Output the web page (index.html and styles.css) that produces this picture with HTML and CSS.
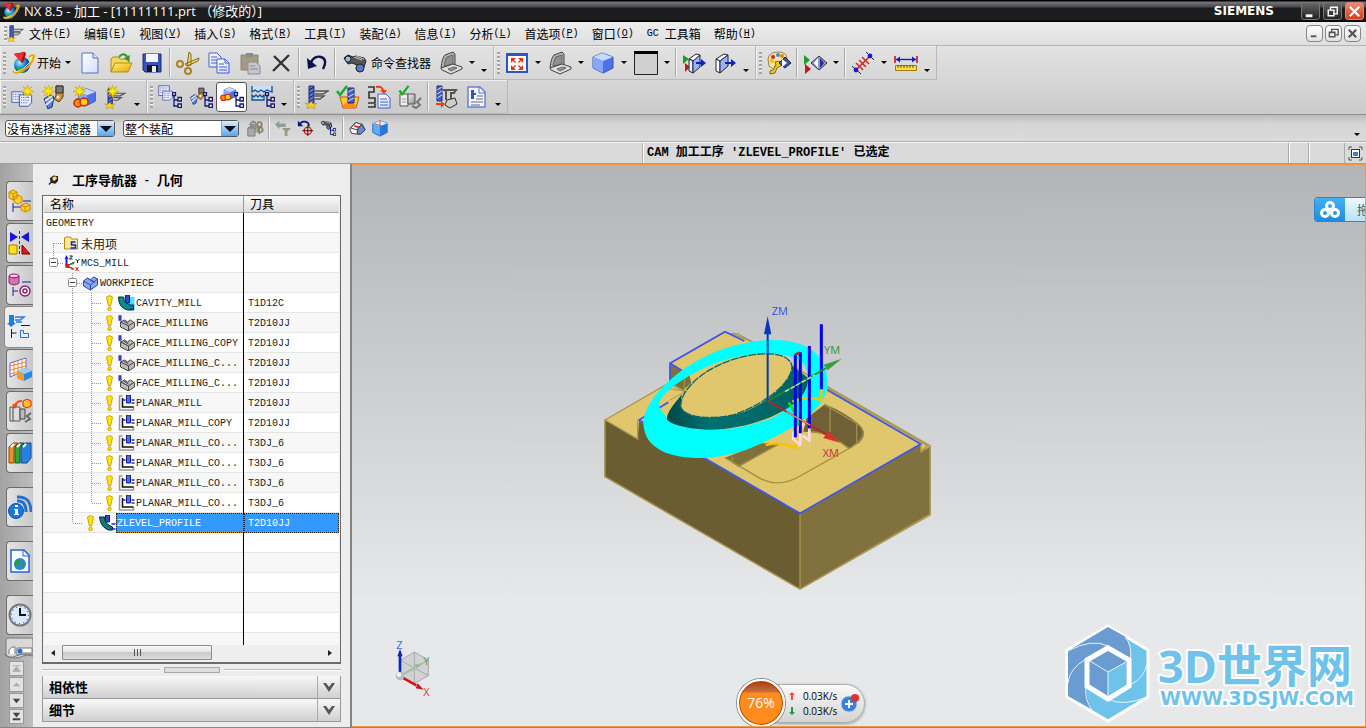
FILE: index.html
```html
<!DOCTYPE html>
<html lang="zh-CN">
<head>
<meta charset="utf-8">
<title>NX 8.5 - 加工</title>
<link rel="stylesheet" href="styles.css">
</head>
<body>
<svg class="sprite" aria-hidden="true">
  <defs>
    <linearGradient id="gBlue" x1="0" y1="0" x2="1" y2="1"><stop offset="0" stop-color="#b9d0ff"/><stop offset="1" stop-color="#3a62e0"/></linearGradient>
    <linearGradient id="gPage" x1="0" y1="0" x2="1" y2="1"><stop offset="0" stop-color="#fff"/><stop offset="1" stop-color="#cfdcff"/></linearGradient>
    <linearGradient id="gGold" x1="0" y1="0" x2="1" y2="1"><stop offset="0" stop-color="#fff27a"/><stop offset="1" stop-color="#e8a800"/></linearGradient>
    <linearGradient id="gGrey" x1="0" y1="0" x2="1" y2="1"><stop offset="0" stop-color="#f4f4f4"/><stop offset="1" stop-color="#8a8a8a"/></linearGradient>
    <radialGradient id="gGlobe" cx=".35" cy=".35"><stop offset="0" stop-color="#aef0ff"/><stop offset=".6" stop-color="#2a9be0"/><stop offset="1" stop-color="#0a4aa0"/></radialGradient>
    <linearGradient id="gTeal" x1="0" y1="0" x2="1" y2="0"><stop offset="0" stop-color="#004848"/><stop offset=".3" stop-color="#007070"/><stop offset="1" stop-color="#006060"/></linearGradient>
  </defs>
  <symbol id="nx" viewBox="0 0 24 24"><circle cx="11" cy="14" r="8" fill="url(#gGlobe)"/><path d="M5 17q3-3 6 1t5 2q-5 4-9 0z" fill="#2fa84a"/><path d="M2 20Q5 24 13 19T23 5Q22 3 18 6" fill="none" stroke="#e8a800" stroke-width="2"/><path d="M3 20Q6 22 13 17T21 5" fill="none" stroke="#fff07a" stroke-width="1"/><path d="M3 3l11-2-3 11z" fill="#e01818"/><path d="M3 3l11-2 1 2-3 9z" fill="#a80c0c"/><path d="M3 3l10-1-3 9z" fill="#f03030"/></symbol>
  <symbol id="new" viewBox="0 0 24 24"><path d="M4 2h11l5 5v15H4z" fill="url(#gPage)" stroke="#5a6cc8"/><path d="M15 2v5h5" fill="#dfe6ff" stroke="#5a6cc8"/></symbol>
  <symbol id="open" viewBox="0 0 24 24"><path d="M2 21V8l2-2h5l2 2h9v5" fill="#f5d860" stroke="#b88a10"/><path d="M2 21l4-9h17l-4 9z" fill="url(#gGold)" stroke="#b88a10"/><path d="M10 6q5-6 9 1" fill="none" stroke="#2f9a2f" stroke-width="2"/><path d="M21 4l-1 7-5-4z" fill="#2f9a2f"/></symbol>
  <symbol id="save" viewBox="0 0 24 24"><path d="M3 3h18v18H5l-2-2z" fill="#3a52b8" stroke="#1c2c70"/><path d="M6 3h12v8H6z" fill="#f0f4ff"/><path d="M7 14h11v7H7z" fill="#10182c"/><path d="M12 15h4v6h-4z" fill="#e8e8e8"/></symbol>
  <symbol id="cut" viewBox="0 0 24 24"><path d="M11 15L13 1l2 2 0 11zM9 13l14-6-1 3-11 5z" fill="#f0d878" stroke="#8a6a10"/><circle cx="4" cy="13" r="3" fill="none" stroke="#a8841c" stroke-width="2"/><circle cx="12" cy="20" r="3" fill="none" stroke="#a8841c" stroke-width="2"/></symbol>
  <symbol id="copy" viewBox="0 0 24 24"><path d="M2 2h8l4 4v10H2z" fill="url(#gPage)" stroke="#4a5cc8"/><path d="M4 6h6M4 9h8M4 12h6" stroke="#4a5cc8"/><path d="M10 8h8l4 4v10H10z" fill="url(#gPage)" stroke="#4a5cc8"/><path d="M18 8v4h4M12 13h5M12 16h8M12 19h8" stroke="#4a5cc8" fill="none"/></symbol>
  <symbol id="paste" viewBox="0 0 24 24"><path d="M3 4h17v15H3z" fill="#a39b80" stroke="#8d8670"/><path d="M8 2h7v4H8z" fill="#8a8a8a"/><path d="M10 11h8l4 4v8H10z" fill="#c4c6cc" stroke="#8b8e98"/><path d="M12 15h5M12 18h8" stroke="#8b8e98"/></symbol>
  <symbol id="del" viewBox="0 0 24 24"><path d="M5 5l15 15M20 4L4 20" stroke="#333" stroke-width="2.400" fill="none"/></symbol>
  <symbol id="undo" viewBox="0 0 24 24"><path d="M5 13Q9 4 16 6T18 18" fill="none" stroke="#0c1050" stroke-width="2.400"/><path d="M2 7l1 11 9-3z" fill="#0c1050"/></symbol>
  <symbol id="binoc" viewBox="0 0 24 24"><path d="M1 7l4-3 5 2 3-1 8 2 2 3-3 9-4 2-3-3 1-4-5-2-4 1z" fill="#555" stroke="#222"/><circle cx="5" cy="8" r="3" fill="#9fb4e0" stroke="#222"/><circle cx="17" cy="17" r="4" fill="#5878c8" stroke="#222"/><path d="M11 6l8 3M13 5l8 3" stroke="#ccc"/></symbol>
  <symbol id="laptop" viewBox="0 0 24 24"><path d="M2 17Q3 7 6 4l8-3 2 2v11L6 18z" fill="#b4b4b4" stroke="#444"/><path d="M5 15q1-7 3-9l6-2v9z" fill="#8f8f8f" stroke="#666"/><path d="M2 17l12-4 9 3v2l-11 5-9-4z" fill="#ddd" stroke="#444"/><path d="M9 18l6-2 3 1-6 3z" fill="#999" stroke="#666"/></symbol>
  <symbol id="fit" viewBox="0 0 24 24"><path d="M2 3h20v18H2z" fill="#fff" stroke="#2a56c8" stroke-width="2"/><path d="M1 2h22v3H1z" fill="#2a56c8"/><path d="M6 7h5l-2 2 2 2-1 1-2-2-2 2zM18 7v5l-2-2-2 2-1-1 2-2-2-2zM6 19v-5l2 2 2-2 1 1-2 2 2 2zM18 19h-5l2-2-2-2 1-1 2 2 2-2z" fill="#f03010"/></symbol>
  <symbol id="cube" viewBox="0 0 24 24"><path d="M2 6l9-4 11 4v11l-10 5-10-5z" fill="#4d72e8" stroke="#3450b0"/><path d="M2 6l9-4 11 4-10 4z" fill="#c8d8ff"/><path d="M2 6l10 4v12L2 17z" fill="#86a6f8"/></symbol>
  <symbol id="rect" viewBox="0 0 24 24"><path d="M.5.5h23v23H.5z" fill="#d0d0d0" stroke="#222"/><path d="M0 0h24v3H0z" fill="#000"/></symbol>
  <symbol id="clipA" viewBox="0 0 24 24"><path d="M1 4l6 4-6 5z" fill="#18a028"/><path d="M3 12l5 4-5 5z" fill="#c01818"/><path d="M7 8l7-5 4 1-6 6z" fill="#fff" stroke="#223"/><path d="M7 8l4 2v12l-4-2z" fill="#e4ecff" stroke="#223"/><path d="M11 10l7-6v12l-7 6z" fill="#98b4f8" stroke="#223"/><path d="M14 12h6" stroke="#1020c0" stroke-width="2"/><path d="M19 8l5 4-5 4z" fill="#1020c0"/></symbol>
  <symbol id="clipB" viewBox="0 0 24 24"><path d="M3 8l8-5 4 1-8 6z" fill="#fff" stroke="#223"/><path d="M3 8l4 2v12l-4-2z" fill="#fff" stroke="#223"/><path d="M7 10l8-6v11l-8 7z" fill="#98b4f8" stroke="#223"/><path d="M12 12h7" stroke="#1020c0" stroke-width="2"/><path d="M18 8l5 4-5 4z" fill="#1020c0"/></symbol>
  <symbol id="palette" viewBox="0 0 24 24"><path d="M1 8q1-7 10-7t9 7-7 6-5 3-6-2z" fill="#fbe3b0" stroke="#a08040"/><circle cx="6" cy="6" r="2" fill="#e02020"/><circle cx="11" cy="4" r="2" fill="#18a0e8"/><circle cx="5" cy="10" r="2" fill="#f0c000"/><circle cx="15" cy="5" r="2" fill="#e88010"/><path d="M3 20l3-1 3-5-1-3 4-1 3 4-5 3-2 5-5 1z" fill="#f0c820" stroke="#8a6a10"/><path d="M12 12l6-6 6 6-6 5z" fill="#3c50b0" stroke="#223"/><path d="M15 8l5 4-5 4z" fill="#fff"/></symbol>
  <symbol id="section" viewBox="0 0 24 24"><path d="M1 4l6 5-6 5z" fill="#18a028"/><path d="M2 13l6 5-6 5z" fill="#c01818"/><path d="M8 12l8-7 8 7-8 7z" fill="#8a9cc8" stroke="#334"/><path d="M15 7v10l-4-5z" fill="#fff"/><path d="M17 7v10l4-5z" fill="#203090"/></symbol>
  <symbol id="measure" viewBox="0 0 24 24"><path d="M4 20L20 4" stroke="#e01818" stroke-width="1.400"/><path d="M5 12l7 7M8 9l7 7M11 6l7 7" stroke="#e01818" stroke-width="1.400"/><path d="M1 15l9 8M15 1l8 8" stroke="#222"/><circle cx="5" cy="19" r="2.400" fill="#1020d0"/><circle cx="19" cy="5" r="2.400" fill="#1020d0"/></symbol>
  <symbol id="ruler" viewBox="0 0 24 24"><path d="M1 5v7M23 5v7" stroke="#c01818" stroke-width="1.600"/><path d="M2 8.500h20" stroke="#1020c0" stroke-width="1.400"/><path d="M2 8.500l4-3v6zM22 8.500l-4-3v6z" fill="#1020c0"/><path d="M1.500 14.500h21v5h-21z" fill="#ffe24a" stroke="#a07a10"/><path d="M4 14v3M7 14v3M10 14v3M13 14v3M16 14v3M19 14v3" stroke="#6a4a00"/></symbol>
  <symbol id="star" viewBox="0 0 24 24"><path d="M12 0l2 7 6-4-4 6 8 3-8 2 4 6-6-4-2 8-2-8-6 4 4-6-8-2 8-3-4-6 6 4z" fill="#ffe800" stroke="#c0a000"/></symbol>
  <symbol id="page" viewBox="0 0 16 16"><path d="M1 1h14v9l-4 4H1z" fill="#e9eeff" stroke="#36479a"/><path d="M3 4h10M3 7h10M3 10h7" stroke="#36479a" stroke-dasharray="1 1"/></symbol>
  <symbol id="newProg" viewBox="0 0 24 24"><use href="#page" x="0" y="6" width="13" height="13"/><use href="#page" x="7" y="9" width="15" height="14"/><use href="#star" x="10" y="0" width="13" height="13"/></symbol>
  <symbol id="drill" viewBox="0 0 24 24"><path d="M2 14l6-4 4 2-2 10-4 2z" fill="#5a80d8" stroke="#1c2c70"/><path d="M4 20l7-6M3 16l7-5" stroke="#dfe8ff" stroke-width="2"/><path d="M14 1h7v11l-4 5-5-3 2-3z" fill="#d79030" stroke="#5a3a10"/><path d="M14 1h7v7h-7z" fill="#777" stroke="#333"/><circle cx="16" cy="12" r="1.500" fill="#fff"/></symbol>
  <symbol id="newTool" viewBox="0 0 24 24"><use href="#drill" width="24" height="24"/><use href="#star" x="0" y="0" width="13" height="13"/></symbol>
  <symbol id="geom" viewBox="0 0 24 24"><use href="#cube" x="4" y="2" width="20" height="20"/><circle cx="5" cy="18" r="4" fill="#ff8a10" stroke="#d02010" stroke-width="1.500"/><circle cx="11" cy="17" r="4" fill="#ffd010" stroke="#d02010" stroke-width="1.500"/></symbol>
  <symbol id="newGeom" viewBox="0 0 24 24"><use href="#geom" width="24" height="24"/><use href="#star" width="13" height="13"/></symbol>
  <symbol id="mill" viewBox="0 0 24 24"><path d="M4 1h5v17H4z" fill="#5a70d0" stroke="#1c2878"/><path d="M4 5l5-3M4 9l5-3M4 13l5-3M4 17l5-3" stroke="#14205c"/><path d="M10 6h13l-5 3h-8M10 11h9l-4 3h-5" fill="none" stroke="#555" stroke-width="1.400"/><path d="M6 16l2 3 4-1-3 3 1 3-4-2-4 2 1-3-3-3 4 1z" fill="#ffd21c" stroke="#a07a10" stroke-width=".5"/></symbol>
  <symbol id="newOp" viewBox="0 0 24 24"><use href="#mill" y="3" width="22" height="21"/><use href="#star" x="2" width="13" height="13"/></symbol>
  <symbol id="tree" viewBox="0 0 10 16"><path d="M2 3v11h4M2 8h4" fill="none" stroke="#101880" stroke-width="1.300"/><path d="M.5.5h3v3h-3zM6 5.500h3.500v3.500H6zM6 12h3.500v3.500H6z" fill="#fff6a0" stroke="#101880" stroke-width="1.300"/></symbol>
  <symbol id="vProg" viewBox="0 0 24 24"><use href="#page" width="12" height="12"/><use href="#page" x="4" y="5" width="11" height="12"/><use href="#tree" x="14" y="7" width="10" height="16"/></symbol>
  <symbol id="vTool" viewBox="0 0 24 24"><use href="#drill" width="17" height="22"/><use href="#tree" x="14" y="7" width="10" height="16"/></symbol>
  <symbol id="vGeom" viewBox="0 0 24 24"><use href="#geom" width="17" height="17"/><use href="#tree" x="14" y="7" width="10" height="16"/></symbol>
  <symbol id="vMeth" viewBox="0 0 24 24"><path d="M1 1v6l3-2 3 2 3-2 3 2 3-2 5 2V1M1 15v-5l2 2 2-2 2 2 2-2 2 2 2-2v5z" fill="#c8e0f8" stroke="#16508c" stroke-width="1.300"/><use href="#tree" x="14" y="7" width="10" height="16"/></symbol>
  <symbol id="tick" viewBox="0 0 12 12"><path d="M1 6l3 4 7-9" fill="none" stroke="#18b028" stroke-width="2.500"/></symbol>
  <symbol id="verify" viewBox="0 0 24 24"><path d="M4 12h19l-3 11H7z" fill="#ffcc20" stroke="#d05010"/><path d="M7 20l6-4 7 4-3 3H8z" fill="#ff8a10"/><path d="M12 3h6v15h-6z" fill="#4a60c0" stroke="#1c2878"/><path d="M12 7l6-3M12 12l6-3M12 16l6-3" stroke="#cdd6ff"/><use href="#tick" width="12" height="12"/></symbol>
  <symbol id="post" viewBox="0 0 24 24"><path d="M1 2h6v5H2v6h6v5H1M1 22h7v-3" fill="none" stroke="#333" stroke-width="1.600"/><path d="M11 9h8l4 4v10H11z" fill="url(#gPage)" stroke="#4a5cc8"/><path d="M13 14h7M13 17h8M13 20h8" stroke="#4a5cc8"/><path d="M9 2q7-1 7 4" fill="none" stroke="#e84010" stroke-width="2"/><path d="M13 5h7l-3 4z" fill="#e84010"/></symbol>
  <symbol id="shop" viewBox="0 0 24 24"><path d="M2 9h8v12H2z" fill="#eee" stroke="#555"/><path d="M10 9h7v10h-7z" fill="url(#gGrey)" stroke="#555"/><path d="M4 14h4M4 17h4" stroke="#99a"/><path d="M23 13l-4 4 3 3-4 3-4-2" fill="none" stroke="#777" stroke-width="2"/><use href="#tick" width="12" height="11"/></symbol>
  <symbol id="machine" viewBox="0 0 24 24"><path d="M3 1h5v15H3z" fill="#4a60c0" stroke="#1c2878"/><path d="M3 5l5-3M3 9l5-3M3 13l5-3" stroke="#cdd6ff"/><path d="M9 5h13l-2 3h-3v7M12 6v9" fill="none" stroke="#555" stroke-width="2"/><path d="M13 15l8-2 2 6-7 4-5-3z" fill="#ccc" stroke="#333"/><path d="M2 19h6" stroke="#e84010" stroke-width="2"/><path d="M7 16l4 3-4 4z" fill="#e84010"/></symbol>
  <symbol id="doc" viewBox="0 0 24 24"><path d="M3 2h12l5 5v15H3z" fill="#f4f7ff" stroke="#6a80d8" stroke-width="1.500"/><path d="M14 2v6h6" fill="none" stroke="#5a70d0"/><path d="M6 5h3v9H6zM9 8h2v2H9z" fill="#3a50b8"/><path d="M12 11h6M11 14h7M6 17h12M6 20h9" stroke="#667"/></symbol>
  <symbol id="selA" viewBox="0 0 20 20"><path d="M2 10h8v9H2zM2 10l5-3 8 3v7" fill="#aaa" stroke="#777"/><circle cx="8" cy="6" r="3" fill="none" stroke="#888" stroke-width="1.500"/><path d="M8 1v10M3 6h10" stroke="#888"/><circle cx="15" cy="6" r="2.500" fill="none" stroke="#8d8560" stroke-width="2"/><circle cx="16" cy="12" r="2.500" fill="none" stroke="#8d8560" stroke-width="2"/></symbol>
  <symbol id="selB" viewBox="0 0 20 20"><path d="M1 6l5-4v3h7v4H6v2z" fill="#8f9f98"/><path d="M9 10h10l-4 4v5h-3v-5z" fill="#a09880"/></symbol>
  <symbol id="selC" viewBox="0 0 20 20"><path d="M3 7Q4 2 9 3t4 5" fill="none" stroke="#0c1478" stroke-width="2"/><path d="M1 2v6h6z" fill="#0c1478"/><circle cx="12" cy="13" r="4" fill="none" stroke="#e01818" stroke-width="1.500"/><path d="M12 7v12M6 13h12" stroke="#300"/></symbol>
  <symbol id="selD" viewBox="0 0 20 20"><use href="#binoc" width="14" height="13"/><use href="#tree" x="10" y="6" width="8" height="13"/></symbol>
  <symbol id="selE" viewBox="0 0 20 20"><path d="M2 11l6-7 8 2 3 6-6 5-9-1z" fill="#f4f6fc" stroke="#334"/><path d="M3 10l6-6 6 2-5 6z" fill="#fff" stroke="#334"/><path d="M10 16l1-5 4-5 4 6-5 5z" fill="#6888d8" stroke="#334"/><path d="M7 8l5 1" stroke="#e02020" stroke-width="2"/></symbol>
  <symbol id="selF" viewBox="0 0 20 20"><path d="M2 5l8-3 8 3v10l-8 4-8-4z" fill="#58b0f8" stroke="#1c68c8"/><path d="M2 5l8-3 8 3-8 3z" fill="#d8f0ff"/><path d="M10 8l8-3v10l-8 4z" fill="#2a74e0"/><path d="M10 1v7M4 5l8 3" stroke="#e04040"/></symbol>

  <symbol id="rAsm" viewBox="0 0 24 24"><path d="M5 14v9M5 18h8M15 12h8" stroke="#1424a0" fill="none"/><path d="M1 3l4-2 4 2v6l-4 2-4-2zM6 8l4-2 4 2v5l-4 2-4-2zM13 16l5-2 4 2v5l-5 2-4-2z" fill="#ffd028" stroke="#c88a00"/><path d="M1 3l4 2 4-2M5 5v6M13 16l4 2 5-2M17 18v5" fill="none" stroke="#c88a00"/></symbol>
  <symbol id="rCon" viewBox="0 0 24 24"><path d="M2 1l8 5-8 5zM21 1l-8 5 8 5z" fill="#1414e0"/><path d="M11.500 0v24" stroke="#333" stroke-dasharray="3 2"/><path d="M1 14h8v9H1z" fill="#ffe020" stroke="#a07a00"/><path d="M14 14l8 9h-8z" fill="#e01818" stroke="#700"/></symbol>
  <symbol id="rPart" viewBox="0 0 24 24"><ellipse cx="6" cy="3" rx="5" ry="2" fill="#f8c8e8" stroke="#902070"/><path d="M1 3v7q5 4 10 0V3q-5 4-10 0z" fill="#d870b0" stroke="#902070"/><path d="M5 14v9M5 18h5M14 9h9" stroke="#1424a0"/><circle cx="17" cy="18" r="5" fill="#fff" stroke="#902070" stroke-width="1.500"/><circle cx="17" cy="18" r="2" fill="none" stroke="#902070" stroke-width="1.500"/></symbol>
  <symbol id="rOp" viewBox="0 0 24 24"><path d="M2 0h5v8H2zM0 8h9l-5 4z" fill="#1c80e0"/><path d="M8 2h9l-4 3H8M9 7h6" fill="none" stroke="#1c80e0" stroke-width="1.500"/><path d="M4.500 14v9M4.500 18h5M14 10.500h9" stroke="#123"/><path d="M13.500 15.500h3v3h5v4h-8z" fill="#e4f0ff" stroke="#2870d0"/></symbol>
  <symbol id="rFeat" viewBox="0 0 24 24"><path d="M2 6l16-5v12L2 20z" fill="#fff" stroke="#6068d0"/><path d="M2 9l16-4M2 13l16-4M2 17l16-4M6 5v14M10 4v14M14 3v14" stroke="#f08030"/><path d="M9 14l8-3 7 3v6l-8 4-7-3z" fill="#2a88e0"/><path d="M9 14l8-3 7 3-8 3z" fill="#9ad0ff"/><path d="M9 14l7 3v7l-7-3z" fill="#ff9a18"/></symbol>
  <symbol id="rMach" viewBox="0 0 24 24"><path d="M2 8h10v14H2z" fill="#ddd" stroke="#555"/><path d="M5 8v14M12 10h5v10h-5z" fill="#bbb" stroke="#444"/><path d="M23 14l-4 3 3 3-5 3" fill="none" stroke="#666" stroke-width="2"/><path d="M7 7q1-5 7-5" fill="none" stroke="#f05010" stroke-width="2"/><path d="M4 5h6l-3 5z" fill="#f05010"/><path d="M15 2l4-2 4 2v5l-4 2-4-2z" fill="#ffc020" stroke="#d82010"/></symbol>
  <symbol id="rBook" viewBox="0 0 24 24"><path d="M1 6l4-4h5L6 6v16H1z" fill="#f09020" stroke="#904800"/><path d="M7 6l4-4h5l-4 4v16H7z" fill="#30a838" stroke="#106018"/><path d="M13 6l4-4h6v15l-4 5h-6z" fill="#2880e0" stroke="#104888"/><path d="M3 6l3-3M9 6l3-3M15 6l3-3" stroke="#fff" stroke-width="2"/></symbol>
  <symbol id="rInfo" viewBox="0 0 24 24"><path d="M9 6q9-1 9 11M9 2q14-1 14 15" fill="none" stroke="#2a70c8" stroke-width="3"/><circle cx="8" cy="16" r="7.500" fill="#1878e0" stroke="#0c50a8"/><path d="M7 10h3v2H7zM6 14h4v5h1v1H6v-1h1v-4H6z" fill="#fff"/></symbol>
  <symbol id="rWeb" viewBox="0 0 24 24"><path d="M3 1h13l5 5v17H3z" fill="#f8fbff" stroke="#2a60d8" stroke-width="1.500"/><path d="M15 1v6h6" fill="none" stroke="#2a60d8"/><circle cx="12" cy="15" r="6" fill="#2a88d8"/><path d="M7 12q4-4 5 0t-3 4 1 5q-5-2-3-9zM15 11q4 4 0 9-1-3 0-9z" fill="#28a040"/></symbol>
  <symbol id="rClock" viewBox="0 0 24 24"><circle cx="12" cy="12" r="10.500" fill="#d8e8ff" stroke="#777" stroke-width="2"/><path d="M12 5v7h6" fill="none" stroke="#111" stroke-width="2"/><circle cx="12" cy="12" r="8.500" fill="none" stroke="#224" stroke-dasharray="1 3.450"/></symbol>

  <symbol id="gDown" viewBox="0 0 19 20"><path d="M9.500 10v10M10 10.500h9" class="dot"/></symbol>
  <symbol id="gV" viewBox="0 0 19 20"><path d="M9.500 0v20" class="dot"/></symbol>
  <symbol id="gTee" viewBox="0 0 19 20"><path d="M9.500 0v20M10 10.500h9" class="dot"/></symbol>
  <symbol id="gEnd" viewBox="0 0 19 20"><path d="M9.500 0v10M10 10.500h9" class="dot"/></symbol>
  <symbol id="gBoxEnd" viewBox="0 0 19 20"><path d="M9.500 0v5M14 10.500h5" class="dot"/><rect x="5.500" y="5.500" width="8" height="8" rx="1" fill="#fff" stroke="#888"/><path d="M7 9.500h5" stroke="#333"/></symbol>
  <symbol id="gBoxTee" viewBox="0 0 19 20"><path d="M9.500 0v5M9.500 15v5M14 10.500h5" class="dot"/><rect x="5.500" y="5.500" width="8" height="8" rx="1" fill="#fff" stroke="#888"/><path d="M7 9.500h5" stroke="#333"/></symbol>
  <symbol id="bang" viewBox="0 0 16 16"><path d="M5 2q3-3 6 0l-1 5-1 4H7L6 7z" fill="#ffe600" stroke="#c8a800"/><circle cx="8" cy="14" r="1.700" fill="#ffe600" stroke="#c8a800"/></symbol>
  <symbol id="folder" viewBox="0 0 16 16"><path d="M1 14V3l1-1h5l1 2h6v10z" fill="#ffe79a" stroke="#b08818"/><path d="M12 7H8v3h4v3H7" fill="none" stroke="#1424c0" stroke-width="1.500"/></symbol>
  <symbol id="mcs" viewBox="0 0 16 16"><path d="M3 12V1M3 11l8-4M3 11l7 3" stroke="#111" fill="none"/><path d="M1 4l2-4 2 4zM2 3h2v8H2z" fill="#1428d0"/><path d="M3 11l7-4 1 2z" fill="#18a028"/><path d="M2 9h4v4H2zM8 12l3 2-3 1z" fill="#e01818"/><path d="M6 1h3L6 4h3M12 4l2 2 2-2M14 6v2" fill="none" stroke="#111"/><path d="M12 12l3 4M15 12l-3 4" stroke="#e01818"/></symbol>
  <symbol id="work" viewBox="0 0 16 16"><path d="M1 6l4-3 3 2 3-3 4 2v6l-7 5-7-4z" fill="#8aa6f0" stroke="#2c48b0"/><path d="M1 6l7 4 7-6M8 10v5M5 3l6 4M8 5l4 2" stroke="#2c48b0" fill="none"/></symbol>
  <symbol id="cavity" viewBox="0 0 16 16"><path d="M6 2h10v13H10Q5 11 6 2z" fill="#40e8f0"/><path d="M0 2h5q0 7 10 9v4H9Q0 13 0 2z" fill="#0c8c88" stroke="#033"/><path d="M7 0h4v8H7z" fill="#3048d0" stroke="#142080"/><path d="M11 10h5M11 14h5" stroke="#1428d0"/></symbol>
  <symbol id="face" viewBox="0 0 16 16"><path d="M2 7l4-2 3 2 3-2 4 3v4l-6 4-8-4z" fill="#bbb" stroke="#444"/><path d="M2 7l8 4 6-4M10 11v5M5 6l5 3" fill="none" stroke="#444"/><path d="M0 0h3v6H0z" fill="#5468e0"/><path d="M0 2h3M0 4h3" stroke="#142080"/></symbol>
  <symbol id="planar" viewBox="0 0 16 16"><path d="M4 1H1v14h14v-3" fill="none" stroke="#999" stroke-width="1.500"/><path d="M4 3v9h11" fill="none" stroke="#111" stroke-width="1.500"/><path d="M8 0h4v8H8z" fill="#5468e0" stroke="#142080"/><path d="M4 5h3M13 5h3M13 8h3" stroke="#1428d0" stroke-width="1.500"/></symbol>
  <symbol id="zlevel" viewBox="0 0 16 16"><path d="M0 2h5q0 7 8 10v3H9Q1 12 0 2z" fill="#0c8078" stroke="#022"/><path d="M6 0h4v7H6z" fill="#3048d0" stroke="#142080"/><path d="M12 9h4M11 14h5" stroke="#1428d0" stroke-width="1.500"/></symbol>
</svg>

<header class="titlebar">
  <svg class="app-ico"><use href="#nx"/></svg>
  <h1>NX 8.5 - 加工 - [11111111.prt （修改的）]</h1>
  <span class="brand">SIEMENS</span>
  <div class="winbtns">
    <button class="win" aria-label="最小化"><svg viewBox="0 0 18 18"><path d="M4 12h7v3H4z" fill="#fff"/></svg></button>
    <button class="win" aria-label="还原"><svg viewBox="0 0 18 18"><path d="M7 4.500h7v7h-3M7 4v3M4.500 7.500h6v6h-6z" fill="none" stroke="#fff" stroke-width="1.500"/></svg></button>
    <button class="win close" aria-label="关闭"><svg viewBox="0 0 18 18"><path d="M4 4l10 10M14 4L4 14" stroke="#fff" stroke-width="2.200"/></svg></button>
  </div>
</header>

<nav class="menubar" aria-label="菜单">
  <i class="grip"></i>
  <svg class="menu-ico"><use href="#mill"/></svg>
  <div class="menus">
    <button>文件<span class="lat">(<u>F</u>)</span></button>
    <button>编辑<span class="lat">(<u>E</u>)</span></button>
    <button>视图<span class="lat">(<u>V</u>)</span></button>
    <button>插入<span class="lat">(<u>S</u>)</span></button>
    <button>格式<span class="lat">(<u>R</u>)</span></button>
    <button>工具<span class="lat">(<u>T</u>)</span></button>
    <button>装配<span class="lat">(<u>A</u>)</span></button>
    <button>信息<span class="lat">(<u>I</u>)</span></button>
    <button>分析<span class="lat">(<u>L</u>)</span></button>
    <button>首选项<span class="lat">(<u>P</u>)</span></button>
    <button>窗口<span class="lat">(<u>O</u>)</span></button>
    <button><span class="lat">GC </span>工具箱</button>
    <button>帮助<span class="lat">(<u>H</u>)</span></button>
  </div>
  <div class="docbtns">
    <button aria-label="最小化文档"><svg viewBox="0 0 14 14"><path d="M3 9h6v2H3z" fill="#555"/></svg></button>
    <button aria-label="还原文档"><svg viewBox="0 0 14 14"><path d="M5 2.500h7v6H9M5 2v3M2.500 5.500h6v5h-6zM2 6h7" fill="none" stroke="#555" stroke-width="1.500"/></svg></button>
    <button aria-label="关闭文档"><svg viewBox="0 0 14 14"><path d="M3 3l8 8M11 3l-8 8" stroke="#555" stroke-width="2.400"/></svg></button>
  </div>
</nav>

<div class="toolbars">
  <div class="toolrow">
    <div class="group">
      <i class="grip"></i>
      <button class="wide start"><svg><use href="#nx"/></svg>开始<i class="tri"></i></button>
      <button class="tool" aria-label="新建"><svg><use href="#new"/></svg></button>
      <button class="tool" aria-label="打开"><svg><use href="#open"/></svg></button>
      <button class="tool" aria-label="保存"><svg><use href="#save"/></svg></button>
      <i class="sep"></i>
      <button class="tool" aria-label="剪切"><svg><use href="#cut"/></svg></button>
      <button class="tool" aria-label="复制"><svg><use href="#copy"/></svg></button>
      <button class="tool" aria-label="粘贴"><svg><use href="#paste"/></svg></button>
      <button class="tool" aria-label="删除"><svg><use href="#del"/></svg></button>
      <i class="sep"></i>
      <button class="tool" aria-label="撤消"><svg><use href="#undo"/></svg></button>
      <i class="sep"></i>
      <button class="wide finder"><svg><use href="#binoc"/></svg>命令查找器</button>
      <button class="tool" aria-label="触控模式"><svg><use href="#laptop"/></svg></button>
      <button class="drop" aria-label="更多"><i class="tri"></i></button>
      <button class="over" aria-label="工具条选项"><i class="tri"></i></button>
    </div>
    <div class="group">
      <i class="grip"></i>
      <button class="tool" aria-label="适合窗口"><svg><use href="#fit"/></svg></button>
      <button class="drop" aria-label="更多"><i class="tri"></i></button>
      <button class="tool" aria-label="视图方向"><svg><use href="#laptop"/></svg></button>
      <button class="drop" aria-label="更多"><i class="tri"></i></button>
      <button class="tool" aria-label="着色"><svg><use href="#cube"/></svg></button>
      <button class="drop" aria-label="更多"><i class="tri"></i></button>
      <button class="tool" aria-label="背景"><svg><use href="#rect"/></svg></button>
      <button class="drop" aria-label="更多"><i class="tri"></i></button>
      <i class="sep"></i>
      <button class="tool" aria-label="编辑截面"><svg><use href="#clipA"/></svg></button>
      <button class="tool" aria-label="剪切截面"><svg><use href="#clipB"/></svg></button>
      <button class="over" aria-label="工具条选项"><i class="tri"></i></button>
    </div>
    <div class="group">
      <i class="grip"></i>
      <button class="tool" aria-label="编辑对象显示"><svg><use href="#palette"/></svg></button>
      <i class="sep"></i>
      <button class="tool" aria-label="显示和隐藏"><svg><use href="#section"/></svg></button>
      <button class="drop" aria-label="更多"><i class="tri"></i></button>
      <i class="sep"></i>
      <button class="tool" aria-label="测量曲线"><svg><use href="#measure"/></svg></button>
      <button class="drop" aria-label="更多"><i class="tri"></i></button>
      <button class="tool" aria-label="测量距离"><svg><use href="#ruler"/></svg></button>
      <button class="over" aria-label="工具条选项"><i class="tri"></i></button>
    </div>
  </div>
  <div class="toolrow">
    <div class="group">
      <i class="grip"></i>
      <button class="tool" aria-label="创建程序"><svg><use href="#newProg"/></svg></button>
      <button class="tool" aria-label="创建刀具"><svg><use href="#newTool"/></svg></button>
      <button class="tool" aria-label="创建几何体"><svg><use href="#newGeom"/></svg></button>
      <button class="tool" aria-label="创建工序"><svg><use href="#newOp"/></svg></button>
      <button class="over" aria-label="工具条选项"><i class="tri"></i></button>
    </div>
    <div class="group">
      <i class="grip"></i>
      <button class="tool" aria-label="程序顺序视图"><svg><use href="#vProg"/></svg></button>
      <button class="tool" aria-label="机床视图"><svg><use href="#vTool"/></svg></button>
      <button class="tool on" aria-label="几何视图" aria-pressed="true"><svg><use href="#vGeom"/></svg></button>
      <button class="tool" aria-label="加工方法视图"><svg><use href="#vMeth"/></svg></button>
      <button class="over" aria-label="工具条选项"><i class="tri"></i></button>
    </div>
    <div class="group">
      <i class="grip"></i>
      <button class="tool" aria-label="生成刀轨"><svg><use href="#mill"/></svg></button>
      <button class="tool" aria-label="确认刀轨"><svg><use href="#verify"/></svg></button>
      <button class="tool" aria-label="后处理"><svg><use href="#post"/></svg></button>
      <button class="tool" aria-label="机床检查"><svg><use href="#shop"/></svg></button>
      <i class="sep"></i>
      <button class="tool" aria-label="机床仿真"><svg><use href="#machine"/></svg></button>
      <button class="tool" aria-label="车间文档"><svg><use href="#doc"/></svg></button>
      <button class="over" aria-label="工具条选项"><i class="tri"></i></button>
    </div>
  </div>
</div>

<div class="selbar">
  <div class="combo"><select class="filter" aria-label="类型过滤器"><option>没有选择过滤器</option></select></div>
  <div class="combo"><select class="scope" aria-label="选择范围"><option>整个装配</option></select></div>
  <button class="mini" aria-label="选择组件"><svg><use href="#selA"/></svg></button>
  <i class="sep"></i>
  <button class="mini" aria-label="重置过滤器"><svg><use href="#selB"/></svg></button>
  <button class="mini" aria-label="取消选择"><svg><use href="#selC"/></svg></button>
  <button class="mini" aria-label="在导航器中查找"><svg><use href="#selD"/></svg></button>
  <i class="sep"></i>
  <button class="mini" aria-label="突出显示"><svg><use href="#selE"/></svg></button>
  <button class="mini" aria-label="体选择"><svg><use href="#selF"/></svg></button>
  <button class="over end" aria-label="选择条选项"><i class="tri"></i></button>
</div>

<div class="cue">
  <div class="cue-prompt"></div>
  <p class="cue-text">CAM 加工工序 'ZLEVEL_PROFILE' 已选定</p>
  <div class="cue-a"></div>
  <div class="cue-b"></div>
  <button class="full" aria-label="全屏"><svg viewBox="0 0 15 15"><path d="M1 4V1h3M11 1h3v3M14 11v3h-3M4 14H1v-3" fill="none" stroke="#555"/><rect x="3.500" y="3.500" width="8" height="8" fill="#fff" stroke="#333"/><path d="M5 6h5v4H5z" fill="#3a80d8"/></svg></button>
</div>

<main class="work">
  <nav class="rail" aria-label="资源条">
    <button aria-label="装配导航器"><svg><use href="#rAsm"/></svg></button>
    <button aria-label="约束导航器"><svg><use href="#rCon"/></svg></button>
    <button aria-label="部件导航器"><svg><use href="#rPart"/></svg></button>
    <button class="active" aria-label="工序导航器"><svg><use href="#rOp"/></svg></button>
    <button aria-label="加工特征导航器"><svg><use href="#rFeat"/></svg></button>
    <button aria-label="机床导航器"><svg><use href="#rMach"/></svg></button>
    <button aria-label="重用库"><svg><use href="#rBook"/></svg></button>
    <button class="apart" aria-label="HD3D 工具"><svg><use href="#rInfo"/></svg></button>
    <button class="apart" aria-label="浏览器"><svg><use href="#rWeb"/></svg></button>
    <button class="apart" aria-label="历史记录"><svg><use href="#rClock"/></svg></button>
    <button class="torn" aria-label="系统材料"><svg viewBox="0 0 29 22"><path d="M2 18V3q0-2 2-2h25v18q-7-2-10 0t-9 2-8-3z" fill="#d8d8d8" stroke="#777"/><path d="M5 17v-4l3-3h3v7M13 11h15v5H17l-4 2z" fill="#fff" stroke="#777"/><circle cx="16" cy="14" r="2.500" fill="#2070e0"/><path d="M0 17q5 5 12 2t17-1" fill="none" stroke="#777"/></svg></button>
    <div class="scrollers">
      <button aria-label="顶部"><svg viewBox="0 0 14 14"><path d="M3 4h8M3 10l4-5 4 5z" stroke="#aaa" fill="#aaa"/></svg></button>
      <button aria-label="向上"><svg viewBox="0 0 14 14"><path d="M3 9l4-4 4 4z" fill="#aaa"/></svg></button>
      <button aria-label="向下"><svg viewBox="0 0 14 14"><path d="M3 5h8l-4 5z" fill="#444"/></svg></button>
      <button aria-label="底部"><svg viewBox="0 0 14 14"><path d="M3 3h8l-4 5zM3 9h8v2H3z" fill="#444"/></svg></button>
    </div>
  </nav>

  <section class="panel">
    <h2><svg viewBox="0 0 12 12"><path d="M2 4l4-3 5 1v5l-3 3-5-1z" fill="#222"/><path d="M5 3l3-1 2 2-3 3-2-1z" fill="#ffe24a"/><path d="M4 8l-3 3" stroke="#222" stroke-width="1.500"/></svg>工序导航器<span class="lat"> - </span>几何</h2>
    <div class="navbox">
      <div class="rows">
        <table>
          <thead><tr><th>名称</th><th>刀具</th></tr></thead>
          <tbody>
            <tr><td><div class="node root">GEOMETRY</div></td><td></td></tr>
            <tr><td><div class="node"><svg class="g"><use href="#gDown"/></svg><svg><use href="#folder"/></svg><span class="zh">未用项</span></div></td><td></td></tr>
            <tr><td><div class="node"><svg class="g"><use href="#gBoxEnd"/></svg><svg><use href="#mcs"/></svg><span>MCS_MILL</span></div></td><td></td></tr>
            <tr><td><div class="node"><i class="g"></i><svg class="g"><use href="#gBoxTee"/></svg><svg><use href="#work"/></svg><span>WORKPIECE</span></div></td><td></td></tr>
            <tr><td><div class="node"><i class="g"></i><svg class="g"><use href="#gV"/></svg><svg class="g"><use href="#gTee"/></svg><svg><use href="#bang"/></svg><svg><use href="#cavity"/></svg><span>CAVITY_MILL</span></div></td><td>T1D12C</td></tr>
            <tr><td><div class="node"><i class="g"></i><svg class="g"><use href="#gV"/></svg><svg class="g"><use href="#gTee"/></svg><svg><use href="#bang"/></svg><svg><use href="#face"/></svg><span>FACE_MILLING</span></div></td><td>T2D10JJ</td></tr>
            <tr><td><div class="node"><i class="g"></i><svg class="g"><use href="#gV"/></svg><svg class="g"><use href="#gTee"/></svg><svg><use href="#bang"/></svg><svg><use href="#face"/></svg><span>FACE_MILLING_COPY</span></div></td><td>T2D10JJ</td></tr>
            <tr><td><div class="node"><i class="g"></i><svg class="g"><use href="#gV"/></svg><svg class="g"><use href="#gTee"/></svg><svg><use href="#bang"/></svg><svg><use href="#face"/></svg><span>FACE_MILLING_C...</span></div></td><td>T2D10JJ</td></tr>
            <tr><td><div class="node"><i class="g"></i><svg class="g"><use href="#gV"/></svg><svg class="g"><use href="#gTee"/></svg><svg><use href="#bang"/></svg><svg><use href="#face"/></svg><span>FACE_MILLING_C...</span></div></td><td>T2D10JJ</td></tr>
            <tr><td><div class="node"><i class="g"></i><svg class="g"><use href="#gV"/></svg><svg class="g"><use href="#gTee"/></svg><svg><use href="#bang"/></svg><svg><use href="#planar"/></svg><span>PLANAR_MILL</span></div></td><td>T2D10JJ</td></tr>
            <tr><td><div class="node"><i class="g"></i><svg class="g"><use href="#gV"/></svg><svg class="g"><use href="#gTee"/></svg><svg><use href="#bang"/></svg><svg><use href="#planar"/></svg><span>PLANAR_MILL_COPY</span></div></td><td>T2D10JJ</td></tr>
            <tr><td><div class="node"><i class="g"></i><svg class="g"><use href="#gV"/></svg><svg class="g"><use href="#gTee"/></svg><svg><use href="#bang"/></svg><svg><use href="#planar"/></svg><span>PLANAR_MILL_CO...</span></div></td><td>T3DJ_6</td></tr>
            <tr><td><div class="node"><i class="g"></i><svg class="g"><use href="#gV"/></svg><svg class="g"><use href="#gTee"/></svg><svg><use href="#bang"/></svg><svg><use href="#planar"/></svg><span>PLANAR_MILL_CO...</span></div></td><td>T3DJ_6</td></tr>
            <tr><td><div class="node"><i class="g"></i><svg class="g"><use href="#gV"/></svg><svg class="g"><use href="#gTee"/></svg><svg><use href="#bang"/></svg><svg><use href="#planar"/></svg><span>PLANAR_MILL_CO...</span></div></td><td>T3DJ_6</td></tr>
            <tr><td><div class="node"><i class="g"></i><svg class="g"><use href="#gV"/></svg><svg class="g"><use href="#gEnd"/></svg><svg><use href="#bang"/></svg><svg><use href="#planar"/></svg><span>PLANAR_MILL_CO...</span></div></td><td>T3DJ_6</td></tr>
            <tr class="sel"><td><div class="node"><i class="g"></i><svg class="g"><use href="#gEnd"/></svg><svg><use href="#bang"/></svg><svg><use href="#zlevel"/></svg><span>ZLEVEL_PROFILE</span></div></td><td>T2D10JJ</td></tr>
          </tbody>
        </table>
      </div>
      <div class="hscroll">
        <button aria-label="向左滚动"><svg viewBox="0 0 8 8"><path d="M6 1v6L2 4z" fill="#222"/></svg></button>
        <div class="track"><div class="thumb"><i></i><i></i><i></i></div></div>
        <button aria-label="向右滚动"><svg viewBox="0 0 8 8"><path d="M2 1v6l4-3z" fill="#222"/></svg></button>
      </div>
    </div>
    <div class="splitter"><i class="line"></i><i class="handle"></i><i class="line"></i></div>
    <div class="folds">
      <button class="fold"><span>相依性</span><svg viewBox="0 0 12 10"><path d="M0 1h3l3 4 3-4h3L6 10z" fill="#555"/></svg></button>
      <button class="fold"><span>细节</span><svg viewBox="0 0 12 10"><path d="M0 1h3l3 4 3-4h3L6 10z" fill="#555"/></svg></button>
    </div>
  </section>

  <section class="viewport" aria-label="图形窗口">
    <svg class="model" viewBox="0 0 1080 915">
      <path d="M45 375L240 262V205L405 110 480 137 712 275 1020 452V660L630 882 45 545z" fill="#e0c76e" stroke="#a89650" stroke-width="4"/>
      <path d="M425 115l18 2 90 50M712 280l300 172-20 18v-24" fill="none" stroke="#a89650" stroke-width="4"/>
      <path d="M240 207l58 33 6 24-24 22-40-22z" fill="#80703c"/>
      <path d="M283 235v50M240 268l46 24M215 278l70 10M240 315l45-25" fill="none" stroke="#a89650" stroke-width="3"/>
      <path d="M45 375l98 57 4-54 483 277v227L45 545z" fill="#6b5d32"/>
      <path d="M630 655l362-208v24l28-17v203L630 882z" fill="#80713e"/>
      <path d="M45 375v170l585 337 390-225V455l-28 16v-24M45 375l98 57V378M630 655v227" fill="none" stroke="#a89650" stroke-width="4"/>
      <path d="M640 410l10-40 55-42q60 25 98 57 35 28 5 58l-30 17q-60-50-138-50z" fill="#6f6135"/>
      <path d="M405 488l110-43h55l-125 70z" fill="#80703c"/>
      <path d="M405 488l95 56q60 38 125 2l160-90q60-38 15-71l-97-57M720 340v72M800 385v60M427 485v20M445 515l125-70M655 410q60 0 120 50" fill="none" stroke="#a08e48" stroke-width="4"/>
      <path d="M240 264V205l165-95 58 28M240 205l57 34M712 285l280 162-362 208L147 375l88-53" fill="none" stroke="#3a56f8" stroke-width="5"/>
      <path fill-rule="evenodd" fill="#0ff" d="M160 385C160 310 280 195 420 155 560 115 705 130 713 255 718 340 620 400 480 460 400 492 290 500 220 470 180 450 162 425 160 385zM207 335C205 300 270 255 330 225 420 180 520 165 590 182 640 192 655 215 655 255 652 290 600 345 540 372 460 400 380 410 330 402 270 398 245 390 232 370z"/>
      <path d="M230 372C235 340 265 315 275 298L272 335C290 368 360 374 430 360 520 340 608 260 605 212L640 238 655 250C652 285 640 305 600 335 540 375 440 407 350 404 280 400 240 388 230 372z" fill="url(#gTeal)"/>
      <path d="M272 335C270 290 330 225 430 193 520 165 602 172 606 215 605 262 530 325 430 360 360 374 285 370 272 335z" fill="#e0c76e" stroke="#086868" stroke-width="4" stroke-dasharray="24 3"/>
      <path d="M596 322q20 30 30 70" fill="none" stroke="#0e0" stroke-width="7"/>
      <path d="M607 320l30-11 40 2 17 5v-33M527 450l25-5 35 3 29 12v-33" fill="none" stroke="#ffc000" stroke-width="7"/>
      <path d="M658 400v36l-20-14M631 415v35M644 385l-34 27v20l22 20" fill="none" stroke="#ffd8e8" stroke-width="8"/>
      <path d="M694 88v195M658 153v247M631 172v243M616 180v247" stroke="#0000f0" stroke-width="9"/>
      <path d="M614 179l17-6" stroke="#f00010" stroke-width="7"/>
      <path d="M533 318V110" stroke="#0838b8" stroke-width="6"/><path d="M533 64l11 54h-22z" fill="#0838b8"/>
      <path d="M533 318l175-98" stroke="#208828" stroke-width="5"/><path d="M585 290l90-50" stroke="#c8e8c0" stroke-width="4" stroke-dasharray="14 5"/><path d="M755 191l-42 35-12-17z" fill="#35a03c"/>
      <path d="M533 318l175 100" stroke="#c02020" stroke-width="5"/><path d="M590 351l70 39" stroke="#e8a8a0" stroke-width="3"/><path d="M751 443l-51-14 14-19z" fill="#e02c2c"/>
      <text x="545" y="59" fill="#2458e8">ZM</text><text x="702" y="176" fill="#309838">YM</text><text x="698" y="485" fill="#c83030">XM</text>
    </svg>
    <svg class="triad" viewBox="40 25 132 180">
      <path d="M62 92l42-25 42 24v47l-42 24-42-22z" fill="#d0d2d3" stroke="#aaa" stroke-width="3"/><path d="M104 67v95M62 92l84 46M62 138l84-47" stroke="#aaa" stroke-width="3"/>
      <text x="131" y="107" fill="#50a858">Y</text><path d="M66 136l44-24" stroke="#a8c0a8" stroke-width="7"/><path d="M132 99l-20 17-7-11z" fill="#98b898"/>
      <path d="M61 138V75" stroke="#0828b8" stroke-width="8"/><path d="M61 58l8 22H53z" fill="#0828b8"/><path d="M62 140l48 27" stroke="#d01818" stroke-width="8"/><path d="M132 180l-24-4 6-15z" fill="#c01818"/>
      <circle cx="61" cy="139" r="13" fill="#bbb"/><circle cx="58" cy="135" r="7" fill="#f4f4f4"/><text x="50" y="59" fill="#3a68f0">Z</text><text x="131" y="200" fill="#d84040">X</text>
    </svg>
    <a class="netdisk" href="#"><span class="cloud"><svg viewBox="0 0 20 18"><g fill="none" stroke="#fff" stroke-width="3"><circle cx="10" cy="5" r="3.500"/><circle cx="5" cy="12" r="3.500"/><circle cx="15" cy="12" r="3.500"/></g></svg></span><span class="drag">拖</span></a>
    <div class="speed">
      <div class="ball">76%</div>
      <div class="rates">
        <p><svg viewBox="0 0 8 8"><path d="M4 0l3 3H5v5H3V3H1z" fill="#e8503c"/></svg>0.03K/s</p>
        <p><svg viewBox="0 0 8 8"><path d="M4 8l3-3H5V0H3v5H1z" fill="#1c9850"/></svg>0.03K/s</p>
      </div>
      <button class="plus" aria-label="加速"><svg viewBox="0 0 20 20"><circle cx="9" cy="11" r="8" fill="#3a80dc" stroke="#bcd0ea"/><path d="M9 7v8M5 11h8" stroke="#fff" stroke-width="2"/><circle cx="15" cy="5" r="4" fill="#e03030"/></svg></button>
    </div>
    <svg class="mark" viewBox="-2 0 300 106">
      <path d="M42 3L82 27v47L42 98 1 74V27z" fill="#6fc3ea" stroke="#fff" stroke-width="3"/>
      <path d="M42 4l18 10q6 10 4 22l-22-13-22 13v26q0 13 6 24L2 73V28z" fill="#6a9bd1"/>
      <path d="M64 38q3-15-5-24M42 23Q26 15 2 28M20 36Q3 46 2 60M20 62q-2 14 6 25M42 76q14 8 39-2M64 62q15-7 17-22" fill="none" stroke="#e8f4fc" stroke-width="1"/>
      <path d="M42 25l21 12v26L42 76 21 63V37z" fill="#6a9bd1" stroke="#fff" stroke-width="5"/>
      <path d="M42 49l18-10v23L42 73z" fill="#6fc3ea"/><path d="M24 38l18 11 18-10M42 49v25" fill="none" stroke="#e8f4fc" stroke-width="1"/>
      <text class="big" x="92" y="60">3D世界网</text>
      <text class="url" x="94" y="82">WWW.3DSJW.COM</text>
    </svg>
  </section>
</main>
</body>
</html>
```
FILE: styles.css
```css
* { box-sizing: border-box; }

body {
  margin: 0;
  height: 100vh;
  display: flex;
  flex-direction: column;
  overflow: hidden;
  background: #d4d4d4;
  color: #000;
  font: 12px/16px "Noto Sans CJK SC", sans-serif;
}

button {
  display: flex;
  align-items: center;
  justify-content: center;
  flex: none;
  margin: 0;
  padding: 0;
  border: 0;
  background: none;
  color: inherit;
  font: inherit;
}

svg { display: block; flex: none; }
h1, h2, p { margin: 0; font: inherit; }

.sprite { position: absolute; width: 0; height: 0; }
.dot { fill: none; stroke: #999; stroke-dasharray: 1 1; }
.lat { font: 10px/16px "Liberation Mono", monospace; white-space: pre; }

/* Title bar */
.titlebar {
  display: flex;
  align-items: center;
  flex: none;
  height: 22px;
  padding-right: 2px;
  background: linear-gradient(#000 0 1px, #76767c 2px, #47474c 7px, #1c1c1c 8px, #1c1c1c 20px, #000 21px);
  color: #fff;
}
.app-ico { width: 18px; height: 18px; margin: 0 4px 0 2px; }
.titlebar h1 { flex: 1; font: 13px/18px "Open Sans", "Noto Sans CJK SC", sans-serif; white-space: nowrap; }
.brand { margin-right: 27px; font: bold 12px/18px "DejaVu Sans", sans-serif; }
.winbtns { display: flex; gap: 3px; }
.win { width: 19px; height: 18px; border: 1px solid #77777b; border-radius: 3px; background: linear-gradient(#666, #222); }
.win svg { width: 17px; height: 17px; }
.win.close { border-color: #c88; background: linear-gradient(#f08a70, #d83a20); }

/* Menu bar */
.menubar {
  display: flex;
  align-items: center;
  flex: none;
  height: 24px;
  padding: 0 5px 0 4px;
  border-bottom: 1px solid #b4b4b4;
  background: linear-gradient(#ededed, #dfdfdf);
}
.menu-ico { width: 17px; height: 17px; margin-left: -1px; }
.menus { display: flex; flex: 1; gap: 13px; margin-left: 5px; }
.menus button { white-space: nowrap; }
.docbtns { display: flex; gap: 2px; }
.docbtns button { width: 17px; height: 17px; border: 1px solid #888; border-radius: 4px; background: linear-gradient(#fff, #e2e2e2); }
.docbtns svg { width: 13px; height: 13px; }

.grip {
  flex: none;
  width: 4px;
  height: 22px;
  background: repeating-linear-gradient(#a4a4a4 0 2px, #f4f4f4 2px 3px, transparent 3px 4px);
  border-right: 1px solid #dadada;
}
.menubar .grip { height: 15px; }

/* Tool bars */
.toolbars { flex: none; border-bottom: 1px solid #909090; background: linear-gradient(#e2e2e2, #cbcbcb); }
.toolrow { display: flex; height: 34px; }
.group {
  display: flex;
  align-items: center;
  padding: 0 3px;
  border: 1px solid #b9b9b9;
  border-width: 0 1px 1px 0;
  box-shadow: inset 1px 1px #f0f0f0;
}
.tool { width: 31px; height: 30px; }
.tool svg, .wide svg { width: 24px; height: 24px; }
.tool.on { border: 1px solid #555; border-radius: 3px; background: #fff; }
.wide { height: 30px; gap: 2px; white-space: nowrap; }
.start { padding: 0 3px 0 4px; }
.finder { gap: 4px; padding: 0 4px 0 6px; }
.drop { width: 12px; height: 30px; }
.over { align-self: stretch; align-items: flex-end; width: 12px; padding-bottom: 7px; }
.tri { width: 0; height: 0; border: 3px solid transparent; border-top-color: #000; border-bottom: 0; }
.start .tri { margin-left: 2px; }
.sep { flex: none; align-self: stretch; width: 5px; margin: 2px 0; background: linear-gradient(90deg, transparent 2px, #aaa 2px 3px, #f6f6f6 3px 4px, transparent 4px); }

/* Selection bar */
.selbar {
  display: flex;
  align-items: center;
  flex: none;
  height: 27px;
  padding: 0 3px 0 5px;
  border-bottom: 1px solid #b0b0b0;
  background: linear-gradient(#bcbcbc, #d6d6d6 9px, #dadada);
}
.combo { position: relative; margin-right: 8px; }
.combo + .mini { margin-left: -4px; }
.combo select {
  display: block;
  appearance: none;
  height: 17px;
  padding: 0 18px 0 1px;
  border: 1px solid #555;
  border-radius: 3px;
  background: #fff;
  color: #000;
  font: 12px/15px "Noto Sans CJK SC", sans-serif;
}
.filter { width: 110px; }
.scope { width: 116px; }
.combo::before {
  content: "";
  position: absolute;
  top: 1px;
  right: 1px;
  width: 16px;
  height: 15px;
  border-left: 1px solid #7aa8d8;
  background: linear-gradient(#d8ecff, #5aa4f0);
  pointer-events: none;
}
.combo::after {
  content: "";
  position: absolute;
  top: 6px;
  right: 3px;
  border: 6px solid transparent;
  border-top-color: #111;
  border-bottom: 0;
  pointer-events: none;
}
.mini { width: 23px; height: 22px; }
.mini svg { width: 18px; height: 18px; }
.over.end { margin-left: auto; padding-bottom: 5px; }

/* Cue line */
.cue { display: flex; flex: none; height: 22px; border-top: 1px solid #f4f4f4; border-bottom: 1px solid #a0a0a0; background: #dadada; }
.cue-prompt { flex: 645 1 0; border-right: 1px solid #b0b0b0; }
.cue-text { flex: 644 1 0; padding-left: 3px; border-left: 1px solid #fff; font: bold 12px/20px "Liberation Mono", "Noto Sans CJK SC", monospace; white-space: nowrap; }
.cue-a { width: 20px; border-left: 1px solid #aaa; box-shadow: inset 1px 0 #fff; }
.cue-b { width: 36px; border-left: 1px solid #aaa; box-shadow: inset 1px 0 #fff; }
.full { width: 22px; border-left: 1px solid #aaa; }
.full svg { width: 15px; height: 15px; }

/* Work area */
.work { display: flex; flex: 1; min-height: 0; border-bottom: 1px solid #888; }

.rail {
  display: flex;
  flex-direction: column;
  align-items: flex-end;
  flex: none;
  gap: 2px;
  width: 33px;
  padding-top: 17px;
  background: linear-gradient(90deg, #a2a2a2, #bdbdbd);
}
.rail > button { width: 27px; height: 40px; border: 1px solid #6c6c6c; border-right: 0; border-radius: 4px 0 0 4px; background: linear-gradient(90deg, #e4e4e4, #c8c8c8); }
.rail > button svg { width: 24px; height: 24px; }
.rail > .active { width: 29px; height: 42px; margin: -1px 0; border-color: #888; background: #ededed; }
.rail > .apart { margin-top: 12px; }
.rail > .torn { width: 29px; height: 22px; border: 0; background: none; }
.rail > .torn svg { width: 29px; height: 22px; }
.scrollers { display: flex; flex-direction: column; gap: 1px; align-self: center; }
.scrollers button { width: 15px; height: 15px; border: 1px solid #999; background: #e2e2e2; }
.scrollers svg { width: 13px; height: 13px; }

.panel {
  display: flex;
  flex-direction: column;
  flex: none;
  width: 319px;
  padding: 0 9px 5px 9px;
  border-right: 2px solid #858585;
  background: #ededed;
}
.panel h2 { display: flex; align-items: center; height: 31px; padding-left: 6px; font-weight: bold; font-size: 13px; }
.panel h2 svg { width: 11px; height: 12px; margin-right: 13px; }
.panel h2 .lat { font-size: 11px; font-weight: bold; }

.navbox { display: flex; flex-direction: column; flex: 1; min-height: 0; padding: 0 1px 1px; border: 1px solid #6a6a6a; border-bottom-width: 2px; background: #f0f0f0; }
.rows {
  flex: 1;
  min-height: 0;
  overflow: hidden;
  background:
    linear-gradient(#000, #000) 199px 17px / 1px 100% no-repeat,
    repeating-linear-gradient(#fff 0 19px, #e4e4e4 19px 20px, #f7f7f7 20px 39px, #e4e4e4 39px 40px) 0 17px no-repeat;
}
.rows table { width: 100%; table-layout: fixed; border-collapse: separate; border-spacing: 0; }
.rows th { height: 17px; padding: 0 6px; border-right: 1px solid #999; border-bottom: 1px solid #aaa; background: linear-gradient(#fafafa, #dcdcdc); font-weight: normal; line-height: 16px; text-align: left; }
.rows th:first-child { width: 200px; }
.rows th:last-child { border-right: 0; }
.rows td { height: 20px; padding: 1px 0 0 4px; color: #222; font: 10px/19px "Liberation Mono", monospace; }
.rows td:first-child { padding: 0; }
.node { display: flex; align-items: center; height: 20px; white-space: nowrap; }
.node.root { padding: 1px 0 0 2px; }
.node svg { width: 17px; height: 16px; }
.node .g { flex: none; width: 19px; height: 20px; }
.node span { flex: 1; padding: 1px 0 0 1px; }
.node .zh { font: 12px/19px "Noto Sans CJK SC", sans-serif; }
.sel td:last-child, .sel span { background: #39f; box-shadow: inset 0 1px #e08a28, inset 0 -1px #e08a28; color: #fff; outline: 1px dotted #222; outline-offset: -1px; }

.hscroll { display: flex; flex: none; height: 16px; background: #eee; }
.hscroll > button { width: 18px; }
.hscroll > button svg { width: 8px; height: 8px; }
.track { flex: 1; }
.thumb { display: flex; align-items: center; justify-content: center; gap: 2px; width: 58%; height: 15px; border: 1px solid #8c8c8c; border-radius: 1px; background: linear-gradient(#f8f8f8, #e4e4e4 50%, #c8c9cc 50%, #dcdcdc); }
.thumb i { width: 1px; height: 7px; background: #555; }

.splitter { display: flex; align-items: center; gap: 4px; flex: none; height: 12px; }
.line { flex: 1; height: 2px; border-top: 1px solid #bbb; border-bottom: 1px solid #fff; }
.handle { width: 56px; height: 6px; border: 1px solid #aaa; background: #ddd; }
.folds { flex: none; border-right: 1px solid #999; }
.fold { width: 100%; height: 23px; border: 1px solid #9a9a9a; border-width: 0 0 1px 1px; background: linear-gradient(#f8f8f8, #cfd0d2); font-weight: bold; font-size: 13px; }
.fold span { flex: 1; padding-left: 6px; text-align: left; }
.fold svg { box-sizing: content-box; width: 22px; height: 10px; padding: 6px 0; border-left: 1px solid #aaa; }

/* Graphics window */
.viewport {
  position: relative;
  flex: 1;
  min-width: 0;
  overflow: hidden;
  border: 1px solid #f09a40;
  border-left: 0;
  background: linear-gradient(#b3b4b6, #e6e8ea 78%);
}
.viewport text { font: 33px "Open Sans", sans-serif; }
.model { position: absolute; left: 238px; top: 130px; width: 360px; height: 305px; }
.triad { position: absolute; left: 41px; bottom: 28px; width: 44px; height: 60px; }

.netdisk { position: absolute; right: -5px; top: 32px; display: flex; width: 56px; height: 25px; overflow: hidden; border: 1px solid #2a88c8; border-radius: 3px; background: linear-gradient(#eef8ff, #b8e2fa); color: #456; text-decoration: none; }
.cloud { display: flex; align-items: center; justify-content: center; flex: none; width: 30px; background: linear-gradient(#44b0f4, #1c8ce0); }
.cloud svg { width: 20px; height: 18px; }
.drag { padding-left: 12px; line-height: 24px; white-space: nowrap; }

.speed { position: absolute; left: 385px; bottom: -1px; display: flex; align-items: center; }
.ball {
  z-index: 1;
  flex: none;
  width: 48px;
  height: 48px;
  border: 2px solid #fff;
  border-radius: 50%;
  background: linear-gradient(#a83c08 0, #c87040 11px, #ff8c1c 12px, #ff8c1c);
  box-shadow: inset 0 0 0 1px #b04808, 0 0 0 1px #888;
  color: #fff;
  font: 14px/44px "Open Sans", sans-serif;
  text-align: center;
}
.rates { height: 39px; margin-left: -24px; padding: 4px 27px 0 26px; border: 1px solid #aaa; border-radius: 20px; background: linear-gradient(#fafafa, #d4d4d4); box-shadow: 0 1px 3px #999; font: 10px/15px "Open Sans", sans-serif; }
.rates p { display: flex; align-items: center; gap: 7px; }
.rates svg { width: 8px; height: 8px; }
.plus { margin-left: -25px; }
.plus svg { width: 20px; height: 20px; }

.mark { position: absolute; right: 1px; bottom: -3px; width: 300px; height: 106px; }
.mark text { fill: #6fc3ea; stroke: #fff; stroke-width: 4px; stroke-linejoin: round; paint-order: stroke; }
.mark .big { font: bold 45px "Open Sans", "Noto Sans CJK SC", sans-serif; }
.mark .url { font: bold 19px "DejaVu Sans", sans-serif; }
```
